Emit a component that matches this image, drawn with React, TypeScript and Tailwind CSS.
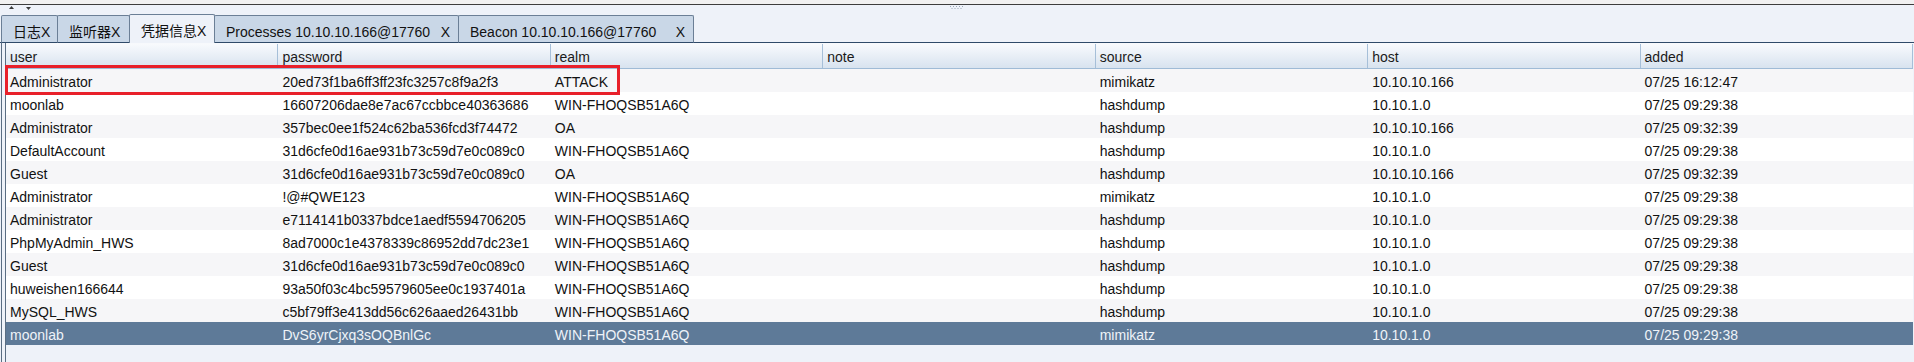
import React from "react";

type Row = string[];

const columns = ["user", "password", "realm", "note", "source", "host", "added"];

const rows: Row[] = [
  ["Administrator", "20ed73f1ba6ff3ff23fc3257c8f9a2f3", "ATTACK", "", "mimikatz", "10.10.10.166", "07/25 16:12:47"],
  ["moonlab", "16607206dae8e7ac67ccbbce40363686", "WIN-FHOQSB51A6Q", "", "hashdump", "10.10.1.0", "07/25 09:29:38"],
  ["Administrator", "357bec0ee1f524c62ba536fcd3f74472", "OA", "", "hashdump", "10.10.10.166", "07/25 09:32:39"],
  ["DefaultAccount", "31d6cfe0d16ae931b73c59d7e0c089c0", "WIN-FHOQSB51A6Q", "", "hashdump", "10.10.1.0", "07/25 09:29:38"],
  ["Guest", "31d6cfe0d16ae931b73c59d7e0c089c0", "OA", "", "hashdump", "10.10.10.166", "07/25 09:32:39"],
  ["Administrator", "!@#QWE123", "WIN-FHOQSB51A6Q", "", "mimikatz", "10.10.1.0", "07/25 09:29:38"],
  ["Administrator", "e7114141b0337bdce1aedf5594706205", "WIN-FHOQSB51A6Q", "", "hashdump", "10.10.1.0", "07/25 09:29:38"],
  ["PhpMyAdmin_HWS", "8ad7000c1e4378339c86952dd7dc23e1", "WIN-FHOQSB51A6Q", "", "hashdump", "10.10.1.0", "07/25 09:29:38"],
  ["Guest", "31d6cfe0d16ae931b73c59d7e0c089c0", "WIN-FHOQSB51A6Q", "", "hashdump", "10.10.1.0", "07/25 09:29:38"],
  ["huweishen166644", "93a50f03c4bc59579605ee0c1937401a", "WIN-FHOQSB51A6Q", "", "hashdump", "10.10.1.0", "07/25 09:29:38"],
  ["MySQL_HWS", "c5bf79ff3e413dd56c626aaed26431bb", "WIN-FHOQSB51A6Q", "", "hashdump", "10.10.1.0", "07/25 09:29:38"],
  ["moonlab", "DvS6yrCjxq3sOQBnlGc", "WIN-FHOQSB51A6Q", "", "mimikatz", "10.10.1.0", "07/25 09:29:38"],
];

const tabs = [
  { label: "日志", width: "w-[57px]", wide: false },
  { label: "监听器", width: "w-[73px]", wide: false },
  { label: "凭据信息", width: "w-[86px]", wide: false, active: true },
  { label: "Processes 10.10.10.166@17760", width: "w-[245px]", wide: true },
  { label: "Beacon 10.10.10.166@17760", width: "w-[236px]", wide: true },
];

function Tab({ label, width, wide, active }: { label: string; width: string; wide: boolean; active?: boolean }) {
  return (
    <div
      className={`${width} shrink-0 -ml-px first:ml-0 flex pl-[11px] border-t border-l border-r border-[#6b7f96] rounded-t-[2px] ${
        active
          ? "h-[29px] bg-[#eef2f9] pt-[5px] leading-[22px] relative z-10"
          : "h-[28px] bg-[#c9d7e7] border-b border-b-[#2f4a69] pt-[5px] leading-[22px]"
      }`}
    >
      <span className="whitespace-nowrap">{label}</span>
      <span className={wide ? "ml-auto mr-[8px]" : ""}>X</span>
    </div>
  );
}

export default function App() {
  return (
    <div className="w-[1914px] h-[362px] overflow-hidden bg-[#eef2f9] text-[14px] text-[#111] font-['Liberation_Sans','Noto_Sans_CJK_SC',sans-serif] relative">
      <div className="h-[4px] bg-[#f1f1f1]" />
      <div className="h-px bg-[#3d3d3d]" />

      {/* split divider with one-touch arrows and grip */}
      <div className="h-[9px] relative">
        <svg className="absolute left-[9px] top-[1px]" width="5" height="4" viewBox="0 0 5 4">
          <path d="M0 3 L2.5 0 L5 3 Z" fill="#3a3a3a" />
        </svg>
        <svg className="absolute left-[26px] top-[2px]" width="5" height="4" viewBox="0 0 5 4">
          <path d="M0 0 L5 0 L2.5 3 Z" fill="#3a3a3a" />
        </svg>
        <svg className="absolute left-[950px] top-[1px]" width="14" height="4" viewBox="0 0 14 4">
          {[0, 3, 6, 9, 12].map((x) => (
            <rect key={x} x={x} y={0} width="1" height="1" fill="#9aa6b5" />
          ))}
          {[1.5, 4.5, 7.5, 10.5].map((x) => (
            <rect key={x} x={x} y={2} width="1" height="1" fill="#9aa6b5" />
          ))}
        </svg>
      </div>

      {/* tab strip */}
      <div className="h-[29px] flex items-end">
        <div className="w-[2px] self-stretch border-b border-[#2f4a69]" />
        {tabs.map((t) => (
          <Tab key={t.label} {...t} />
        ))}
        <div className="flex-1 self-stretch border-b border-[#2f4a69]" />
      </div>

      {/* content */}
      <div className="flex h-[319px]">
        <div className="w-px" />
        <div className="w-px bg-[#5a6d82]" />
        <div className="w-[3px]" />
        <div className="w-px bg-[#5a6d82]" />
        <div className="w-[1907px] flex flex-col">
          <div className="h-px bg-[#f7f9fc]" />
          <div className="grid grid-cols-7 h-[25px] border-b border-[#9fbbd6] bg-gradient-to-b from-[#f8fafd] to-[#d8e3ef]">
            {columns.map((c) => (
              <div key={c} className="border-r border-[#a6bfd8] pl-[4px] pt-[4px] leading-[19px] text-[#1a1a1a]">
                {c}
              </div>
            ))}
          </div>
          {rows.map((r, i) => {
            const selected = i === rows.length - 1;
            return (
              <div
                key={i}
                className={`grid grid-cols-7 h-[23px] ${
                  selected ? "bg-[#5e7a98] text-[#eef3f8]" : i % 2 === 0 ? "bg-[#f6f6f8]" : "bg-white"
                }`}
              >
                {r.map((cell, j) => (
                  <div key={j} className="pl-[4px] pt-[3px] leading-[20px] whitespace-nowrap overflow-hidden">
                    {cell}
                  </div>
                ))}
              </div>
            );
          })}
        </div>
      </div>

      {/* highlight box */}
      <div className="absolute left-[5px] top-[65px] w-[615px] h-[30px] border-[3px] border-[#e8202a] pointer-events-none" />
    </div>
  );
}
